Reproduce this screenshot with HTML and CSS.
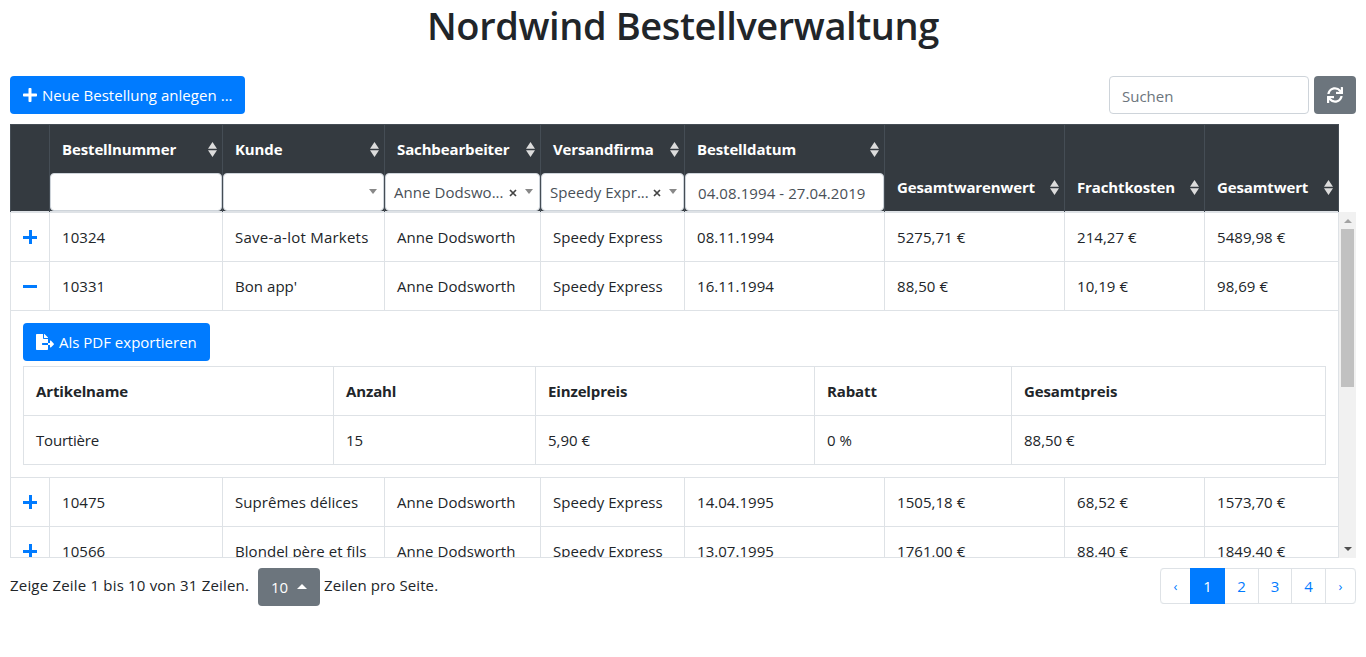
FILE: index.html
```html
<!DOCTYPE html>
<html lang="de">
<head>
<meta charset="utf-8">
<title>Nordwind Bestellverwaltung</title>
<link rel="stylesheet" href="styles.css">
</head>
<body>
<svg class="sprite" width="0" height="0">
  <symbol id="plus" viewBox="0 0 448 512"><path d="M416 208H272V64c0-17.67-14.33-32-32-32h-32c-17.67 0-32 14.33-32 32v144H32c-17.67 0-32 14.33-32 32v32c0 17.67 14.33 32 32 32h144v144c0 17.67 14.33 32 32 32h32c17.67 0 32-14.33 32-32V304h144c17.67 0 32-14.33 32-32v-32c0-17.67-14.33-32-32-32z"/></symbol>
  <symbol id="sync" viewBox="0 0 512 512"><path d="M440.65 12.57l4 82.77A247.16 247.16 0 0 0 255.83 8C134.73 8 33.91 94.92 12.29 209.82A12 12 0 0 0 24.09 224h49.05a12 12 0 0 0 11.67-9.26 175.91 175.91 0 0 1 317-56.94l-101.46-4.86a12 12 0 0 0-12.57 12v47.41a12 12 0 0 0 12 12H500a12 12 0 0 0 12-12V12a12 12 0 0 0-12-12h-47.37a12 12 0 0 0-11.98 12.57zM255.83 432a175.61 175.61 0 0 1-146-77.8l101.8 4.87a12 12 0 0 0 12.57-12v-47.4a12 12 0 0 0-12-12H12a12 12 0 0 0-12 12V500a12 12 0 0 0 12 12h47.35a12 12 0 0 0 12-12.6l-4.15-82.57A247.17 247.17 0 0 0 255.83 504c121.11 0 221.93-86.92 243.55-201.82a12 12 0 0 0-11.8-14.18h-49.05a12 12 0 0 0-11.67 9.26A175.86 175.86 0 0 1 255.83 432z"/></symbol>
  <symbol id="export" viewBox="0 0 576 512"><path d="M384 121.9c0-6.3-2.5-12.4-7-16.9L279.1 7c-4.5-4.5-10.6-7-17-7H256v128h128zM571 308l-95.7-96.4c-10.1-10.1-27.4-3-27.4 11.3V288h-64v64h64v65.2c0 14.3 17.3 21.4 27.4 11.3L571 332c6.6-6.6 6.6-17.4 0-24zm-379 28v-32c0-8.800 7.200-16 16-16h176V160H248c-13.200 0-24-10.800-24-24V0H24C10.700 0 0 10.700 0 24v464c0 13.300 10.700 24 24 24h336c13.300 0 24-10.700 24-24V352H208c-8.800 0-16-7.200-16-16z"/></symbol>
  <symbol id="sort" viewBox="0 0 9 15"><path d="M4.500 0L9 6.700H0zM0 8.300h9L4.500 15z"/></symbol>
  <symbol id="clear" viewBox="0 0 8 8"><path d="M1 1l6 6M7 1L1 7" fill="none" stroke="#444" stroke-width="1.700"/></symbol>
</svg>
<h1>Nordwind Bestellverwaltung</h1>
<div class="toolbar">
  <button class="btn primary new-order"><svg class="fa"><use href="#plus"/></svg><span>Neue Bestellung anlegen ...</span></button>
  <div class="tools">
    <div class="search">Suchen</div>
    <button class="btn grey refresh"><svg class="fa"><use href="#sync"/></svg></button>
  </div>
</div>
<div class="thead cols">
  <div class="th"></div>
  <div class="th"><div class="label"><span>Bestellnummer</span><svg><use href="#sort"/></svg></div><div class="filter"></div></div>
  <div class="th"><div class="label"><span>Kunde</span><svg><use href="#sort"/></svg></div><div class="filter select"><span></span><i class="caret"></i></div></div>
  <div class="th"><div class="label"><span>Sachbearbeiter</span><svg><use href="#sort"/></svg></div><div class="filter select"><span>Anne Dodswo...</span><svg><use href="#clear"/></svg><i class="caret"></i></div></div>
  <div class="th"><div class="label"><span>Versandfirma</span><svg><use href="#sort"/></svg></div><div class="filter select"><span>Speedy Expr...</span><svg><use href="#clear"/></svg><i class="caret"></i></div></div>
  <div class="th"><div class="label"><span>Bestelldatum</span><svg><use href="#sort"/></svg></div><div class="filter date">04.08.1994 - 27.04.2019</div></div>
  <div class="th low"><div class="label"><span>Gesamtwarenwert</span><svg><use href="#sort"/></svg></div></div>
  <div class="th low"><div class="label"><span>Frachtkosten</span><svg><use href="#sort"/></svg></div></div>
  <div class="th low"><div class="label"><span>Gesamtwert</span><svg><use href="#sort"/></svg></div></div>
</div>
<div class="body">
  <div class="rows">
    <div class="row cols"><div class="toggle"><i class="plus"></i></div><div>10324</div><div class="loose">Save-a-lot Markets</div><div>Anne Dodsworth</div><div>Speedy Express</div><div>08.11.1994</div><div>5275,71 €</div><div>214,27 €</div><div>5489,98 €</div></div>
    <div class="row cols"><div class="toggle"><i class="minus"></i></div><div>10331</div><div>Bon app'</div><div>Anne Dodsworth</div><div>Speedy Express</div><div>16.11.1994</div><div>88,50 €</div><div>10,19 €</div><div>98,69 €</div></div>
    <div class="detail">
      <button class="btn primary export"><svg class="fa wide"><use href="#export"/></svg><span>Als PDF exportieren</span></button>
      <div class="items">
        <div class="head">Artikelname</div><div class="head">Anzahl</div><div class="head">Einzelpreis</div><div class="head">Rabatt</div><div class="head">Gesamtpreis</div>
        <div class="tight">Tourtière</div><div>15</div><div>5,90 €</div><div>0 %</div><div>88,50 €</div>
      </div>
    </div>
    <div class="row cols"><div class="toggle"><i class="plus"></i></div><div>10475</div><div>Suprêmes délices</div><div>Anne Dodsworth</div><div>Speedy Express</div><div>14.04.1995</div><div>1505,18 €</div><div>68,52 €</div><div>1573,70 €</div></div>
    <div class="row cols"><div class="toggle"><i class="plus"></i></div><div>10566</div><div>Blondel père et fils</div><div>Anne Dodsworth</div><div>Speedy Express</div><div>13.07.1995</div><div>1761,00 €</div><div>88,40 €</div><div>1849,40 €</div></div>
  </div>
  <div class="scrollbar"><i class="up"></i><div class="thumb"></div><i class="down"></i></div>
</div>
<div class="footer">
  <div class="info"><span class="range">Zeige Zeile 1 bis 10 von 31 Zeilen.</span><button class="btn grey size"><span>10</span><i></i></button><span class="per">Zeilen pro Seite.</span></div>
  <div class="pages"><a class="arrow">‹</a><a class="active">1</a><a>2</a><a>3</a><a>4</a><a class="arrow">›</a></div>
</div>
</body>
</html>
```
FILE: styles.css
```css
* { box-sizing: border-box; }
body { margin: 0; padding: 0 10px; height: 657px; overflow: hidden; background: #fff; color: #212529; font: 15px/24px "Open Sans", "Noto Sans", sans-serif; white-space: nowrap; }
.sprite { display: block; }
h1 { margin: 0; height: 76px; padding-top: 1px; text-align: center; font-size: 38px; line-height: 48px; font-weight: 600; letter-spacing: -0.4px; }
.btn { display: flex; align-items: center; height: 38px; padding: 0 12px 0 13px; border: 0; border-radius: 4px; color: #fff; font: inherit; }
.primary { background: #007bff; }
.grey { background: #6c757d; }
.fa { width: 14px; height: 16px; fill: currentColor; flex: none; margin-right: 5px; }
.fa.wide { width: 18px; }
.new-order { width: 235px; letter-spacing: 0.04px; }
.toolbar { display: flex; justify-content: space-between; height: 48px; }
.tools { display: flex; gap: 5px; }
.search { width: 200px; height: 38px; padding: 7px 12px; border: 1px solid #ced4da; border-radius: 4px; color: #6c757d; }
.refresh { width: 42px; }
.refresh .fa { width: 16px; margin: 0; }
.cols { display: grid; grid-template-columns: 39px 173px 162px 156px 144px 200px 180px 140px 134px; width: 1329px; }
.thead { height: 88px; border: 1px solid #454d55; border-width: 1px 0 0 1px; background: #343a40; color: #fff; font-weight: 700; }
.th { border-right: 1px solid #454d55; display: flex; flex-direction: column; height: 87px; box-shadow: inset 0 -1px #dee2e6; }
.label { display: flex; justify-content: space-between; align-items: center; height: 48px; padding: 0 5px 0 12px; }
.label span, .items .head { letter-spacing: -0.13px; }
.label svg { width: 9px; height: 15px; fill: #dcdcdc; }
.low { justify-content: flex-end; }
.low .label { height: 50px; }
.filter { height: 38px; border: 1px solid #ced4da; border-radius: 4px; background: #fff; color: #495057; font-weight: 400; }
.select { display: flex; align-items: center; padding: 0 6px 0 8px; letter-spacing: 0.05px; }
.select span { flex: 1; }
.select svg { width: 8px; height: 8px; margin: 2px 8px 0 0; }
.caret { border: 4px solid transparent; border-top: 5px solid #888; border-bottom: 0; margin-bottom: 1px; }
.date { padding: 7px 12px; letter-spacing: 0.08px; }
.body { display: flex; height: 346px; overflow: hidden; }
.rows { width: 1329px; border-left: 1px solid #dee2e6; border-top: 1px solid #dee2e6; height: 346px; overflow: hidden; border-bottom: 1px solid #dee2e6; }
.row { height: 49px; width: 1328px; border-bottom: 1px solid #dee2e6; }
.row > div { border-right: 1px solid #dee2e6; padding: 12px; letter-spacing: 0.05px; }
.row .loose { letter-spacing: 0.24px; }
.items .tight { letter-spacing: -0.2px; }
.row .toggle { padding: 17px 0 0 12px; color: #007bff; }
.plus, .minus { display: block; width: 14px; height: 14px; background: linear-gradient(#007bff, #007bff) 0 50% / 14px 3px no-repeat; }
.plus { background: linear-gradient(#007bff, #007bff) 0 50% / 14px 3px no-repeat, linear-gradient(#007bff, #007bff) 50% 0 / 3px 14px no-repeat; }
.detail { height: 167px; padding: 12px; border-right: 1px solid #dee2e6; border-bottom: 1px solid #dee2e6; }
.export { width: 187px; margin-bottom: 5px; }
.items { display: grid; grid-template-columns: 310px 202px 279px 197px 314px; width: 1303px; border-left: 1px solid #dee2e6; border-top: 1px solid #dee2e6; }
.items > div { height: 49px; padding: 12px; border-right: 1px solid #dee2e6; border-bottom: 1px solid #dee2e6; }
.items .head { font-weight: 700; }
.scrollbar { width: 17px; height: 346px; background: #f1f1f1; display: flex; flex-direction: column; align-items: center; }
.up { margin: 7px 0 6px; border: 4px solid transparent; border-top: 0; border-bottom-color: #a3a3a3; }
.thumb { width: 13px; height: 158px; background: #c1c1c1; }
.down { margin: auto 0 7px; border: 4px solid transparent; border-bottom: 0; border-top-color: #505050; }
.footer { display: flex; justify-content: space-between; padding-top: 10px; }
.info { display: flex; }
.info > span { padding-top: 5px; }
.range { width: 248px; letter-spacing: 0.19px; }
.per { letter-spacing: 0.1px; }
.size { width: 62px; margin-right: 4px; }
.size span { width: 26px; text-align: left; }
.size i { border: 5px solid transparent; border-top: 0; border-bottom-color: #fff; margin-bottom: 1px; }
.pages { display: grid; grid-template-columns: 30px 35px 34px 33px 34px 30px; width: 196px; height: 36px; border: 1px solid #dee2e6; border-width: 1px 0; border-radius: 4px; color: #007bff; }
.pages a { padding-top: 5px; text-align: center; border-right: 1px solid #dee2e6; }
.pages a:first-child { border-left: 1px solid #dee2e6; border-right: 0; border-radius: 4px 0 0 4px; }
.pages a:last-child { border-radius: 0 4px 4px 0; }
.pages .active { background: #007bff; color: #fff; border: 0; margin: -1px 0; padding-top: 6px; }
.pages .arrow { font-size: 13px; }
```
